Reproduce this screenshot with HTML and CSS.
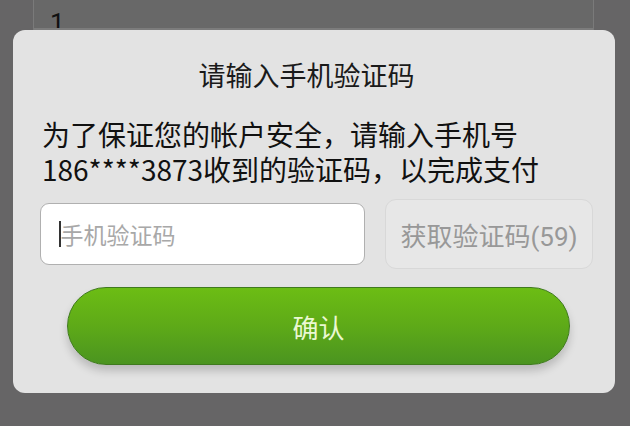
FILE: index.html
```html
<!DOCTYPE html>
<html lang="zh-CN">
<head>
<meta charset="utf-8">
<link rel="stylesheet" href="styles.css">
</head>
<body>
<div class="page">
  <div class="page-panel">
    <div class="page-row"><span class="page-num">1</span></div>
  </div>
</div>
<div class="dialog">
  <div class="title">请输入手机验证码</div>
  <div class="desc">
    <div class="line">为了保证您的帐户安全，请输入手机号</div>
    <div class="line">186****3873收到的验证码，以完成支付</div>
  </div>
  <div class="row">
    <div class="input"><span class="caret"></span><span class="placeholder">手机验证码</span></div>
    <div class="getcode">获取验证码(59)</div>
  </div>
  <div class="confirm">确认</div>
</div>
</body>
</html>
```
FILE: styles.css
```css
html, body {
  margin: 0;
  padding: 0;
}
body {
  width: 630px;
  height: 426px;
  overflow: hidden;
  background: #666566;
  font-family: "Noto Sans CJK SC", "Roboto", sans-serif;
  position: relative;
}
.page {
  padding: 0 36px 0 33px;
}
.page-panel {
  height: 60px;
  border-left: 1px solid #7a7a7a;
  border-right: 1px solid #7a7a7a;
  background: #686868;
}
.page-row {
  height: 28px;
  border-bottom: 2px solid #7c7c7c;
  padding-left: 16px;
  overflow: hidden;
}
.page-num {
  display: block;
  font-family: "Roboto", sans-serif;
  font-size: 26px;
  line-height: 26px;
  color: #111;
  padding-top: 10px;
}
.dialog {
  position: absolute;
  left: 13px;
  top: 30px;
  width: 602px;
  height: 363px;
  box-sizing: border-box;
  background: #e3e3e3;
  border-radius: 12px;
  padding: 30px 0 0 0;
  display: flex;
  flex-direction: column;
}
.title {
  text-align: center;
  font-size: 27px;
  line-height: 30px;
  color: #1a1a1a;
  padding-right: 15px;
}
.desc {
  margin: 27px 0 0 29px;
  display: flex;
  flex-direction: column;
}
.line {
  font-size: 28px;
  line-height: 35px;
  height: 35px;
  color: #111;
  white-space: nowrap;
}
.row {
  display: flex;
  align-items: center;
  margin: 12px 22px 0 27px;
  gap: 20px;
}
.input {
  width: 325px;
  height: 62px;
  box-sizing: border-box;
  background: #fff;
  border: 1px solid #b0b0b0;
  border-radius: 9px;
  display: flex;
  align-items: center;
  padding-left: 18px;
}
.caret {
  width: 1.5px;
  height: 26px;
  background: #333;
}
.placeholder {
  font-size: 23px;
  color: #a8a8a8;
}
.getcode {
  flex: 1;
  height: 70px;
  box-sizing: border-box;
  border: 1px solid #d8d8d8;
  border-radius: 11px;
  background: #e7e7e7;
  display: flex;
  align-items: center;
  justify-content: center;
  font-family: "Roboto", "Noto Sans CJK SC", sans-serif;
  font-size: 26px;
  color: #989898;
}
.confirm {
  margin: 18px 45px 0 54px;
  height: 78px;
  box-sizing: border-box;
  border-radius: 39px;
  border: 1px solid #3f7a1e;
  background: linear-gradient(#6cbd14 0%, #5eaa18 50%, #4b9420 100%);
  box-shadow: 0 6px 8px rgba(0,0,0,0.18);
  display: flex;
  align-items: center;
  justify-content: center;
  font-size: 26px;
  color: #eaf8d2;
}
```
